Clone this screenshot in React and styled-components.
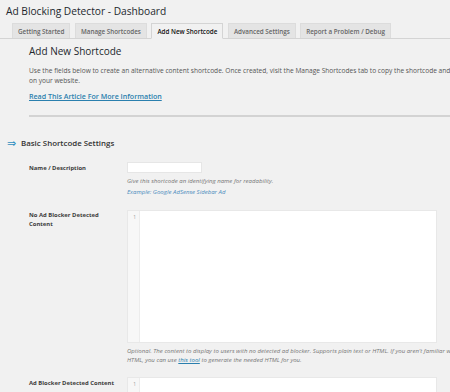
import React from "react";
import styled, { createGlobalStyle } from "styled-components";

const GlobalStyle = createGlobalStyle`
  html, body {
    margin: 0;
    padding: 0;
    background: #f1f1f1;
    overflow: hidden;
  }
  body {
    font-family: "Open Sans", "Liberation Sans", sans-serif;
    color: #444;
  }
`;

const Page = styled.div`
  width: 450px;
  height: 392px;
  overflow: hidden;
  padding-top: 4px;
  box-sizing: border-box;
`;

const Title = styled.h1`
  margin: 0 0 0 6px;
  font-size: 10.2px;
  line-height: 14px;
  font-weight: 400;
  color: #23282d;
  white-space: nowrap;
`;

const TabBar = styled.div`
  display: flex;
  gap: 4.5px;
  margin-top: 5px;
  padding-left: 12px;
  border-bottom: 1px solid #d4d4d4;
  height: 15px;
`;

const Tab = styled.div`
  display: flex;
  align-items: center;
  padding: 0 5px;
  box-sizing: border-box;
  font-size: 6.3px;
  font-weight: 600;
  white-space: nowrap;
  border: 1px solid ${(p) => (p.$active ? "#d4d4d4" : "#dcdcdc")};
  border-bottom: ${(p) => (p.$active ? "1px solid #f1f1f1" : "none")};
  background: ${(p) => (p.$active ? "#f1f1f1" : "#e4e4e4")};
  color: ${(p) => (p.$active ? "#111" : "#666")};
  margin-bottom: -1px;
  height: ${(p) => (p.$active ? "16px" : "15px")};
`;

const Intro = styled.div`
  padding-left: 29px;
`;

const Heading = styled.h2`
  margin: 5px 0 0;
  font-size: 10px;
  line-height: 14px;
  font-weight: 400;
  color: #23282d;
  white-space: nowrap;
`;

const Lead = styled.p`
  margin: 8px 0 0;
  font-size: 6.6px;
  line-height: 9.5px;
  color: #555;
  white-space: nowrap;
`;

const ArticleLink = styled.a`
  display: block;
  margin-top: 6px;
  font-size: 7.1px;
  line-height: 10px;
  font-weight: 600;
  color: #2a7fae;
  text-decoration: underline;
  white-space: nowrap;
`;

const Rule = styled.div`
  margin: 14px 0 0 29px;
  height: 2px;
  background: #d3d3d3;
`;

const SectionHeading = styled.h3`
  display: flex;
  align-items: center;
  gap: 5px;
  margin: 20px 0 0 7px;
  font-size: 7.9px;
  line-height: 12px;
  font-weight: 600;
  color: #333;
`;

const Arrow = styled.span`
  color: #2e8fc0;
  font-size: 11px;
  font-weight: 400;
  line-height: 12px;
`;

const Form = styled.div`
  padding-left: 29px;
`;

const FieldRow = styled.div`
  display: grid;
  grid-template-columns: 98px 310px;
  margin-top: ${(p) => p.$top || 0}px;
`;

const Label = styled.div`
  font-size: 5.9px;
  line-height: 8.5px;
  font-weight: 700;
  color: #3c3c3c;
  padding-top: ${(p) => p.$pad || 0}px;
`;

const Field = styled.div`
  display: flex;
  flex-direction: column;
`;

const TextInput = styled.div`
  width: 75px;
  height: 11px;
  background: #fff;
  border: 1px solid #e6e6e6;
  box-sizing: border-box;
`;

const Help = styled.div`
  font-size: 6.05px;
  line-height: 8.5px;
  font-style: italic;
  color: ${(p) => (p.$blue ? "#4a8bbd" : "#777")};
  white-space: nowrap;
  margin-top: ${(p) => p.$top || 0}px;
`;

const HelpLink = styled.span`
  color: #2a7fae;
  text-decoration: underline;
`;

const Editor = styled.div`
  display: flex;
  height: ${(p) => p.$height}px;
  background: #fff;
  border: 1px solid #e8e8e8;
  box-sizing: border-box;
`;

const Gutter = styled.div`
  width: 12px;
  background: #f7f7f7;
  border-right: 1px solid #ececec;
  font-size: 5px;
  line-height: 8px;
  color: #999;
  text-align: right;
  padding: 2px 3px 0 0;
  box-sizing: border-box;
`;

const tabs = [
  "Getting Started",
  "Manage Shortcodes",
  "Add New Shortcode",
  "Advanced Settings",
  "Report a Problem / Debug",
];

export default function App() {
  return (
    <>
      <GlobalStyle />
      <Page>
        <Title>Ad Blocking Detector - Dashboard</Title>
        <TabBar>
          {tabs.map((t) => (
            <Tab key={t} $active={t === "Add New Shortcode"}>
              {t}
            </Tab>
          ))}
        </TabBar>
        <Intro>
          <Heading>Add New Shortcode</Heading>
          <Lead>
            Use the fields below to create an alternative content shortcode. Once created, visit
            the Manage Shortcodes tab to copy the shortcode and paste it where you want it displayed
            <br />
            on your website.
          </Lead>
          <ArticleLink href="#">Read This Article For More Information</ArticleLink>
        </Intro>
        <Rule />
        <SectionHeading>
          <Arrow>⇒</Arrow>
          Basic Shortcode Settings
        </SectionHeading>
        <Form>
          <FieldRow $top={13}>
            <Label $pad={2}>Name / Description</Label>
            <Field>
              <TextInput />
              <Help $top={4}>Give this shortcode an identifying name for readability.</Help>
              <Help $blue $top={2}>Example: Google AdSense Sidebar Ad</Help>
            </Field>
          </FieldRow>
          <FieldRow $top={14}>
            <Label $pad={1}>
              No Ad Blocker Detected
              <br />
              Content
            </Label>
            <Field>
              <Editor $height={133}>
                <Gutter>1</Gutter>
              </Editor>
              <Help $top={4}>
                Optional. The content to display to users with no detected ad blocker. Supports plain
                text or HTML. If you aren't familiar with
              </Help>
              <Help>
                HTML, you can use <HelpLink>this tool</HelpLink> to generate the needed HTML for you.
              </Help>
            </Field>
          </FieldRow>
          <FieldRow $top={13}>
            <Label $pad={2}>Ad Blocker Detected Content</Label>
            <Field>
              <Editor $height={60}>
                <Gutter>1</Gutter>
              </Editor>
            </Field>
          </FieldRow>
        </Form>
      </Page>
    </>
  );
}
